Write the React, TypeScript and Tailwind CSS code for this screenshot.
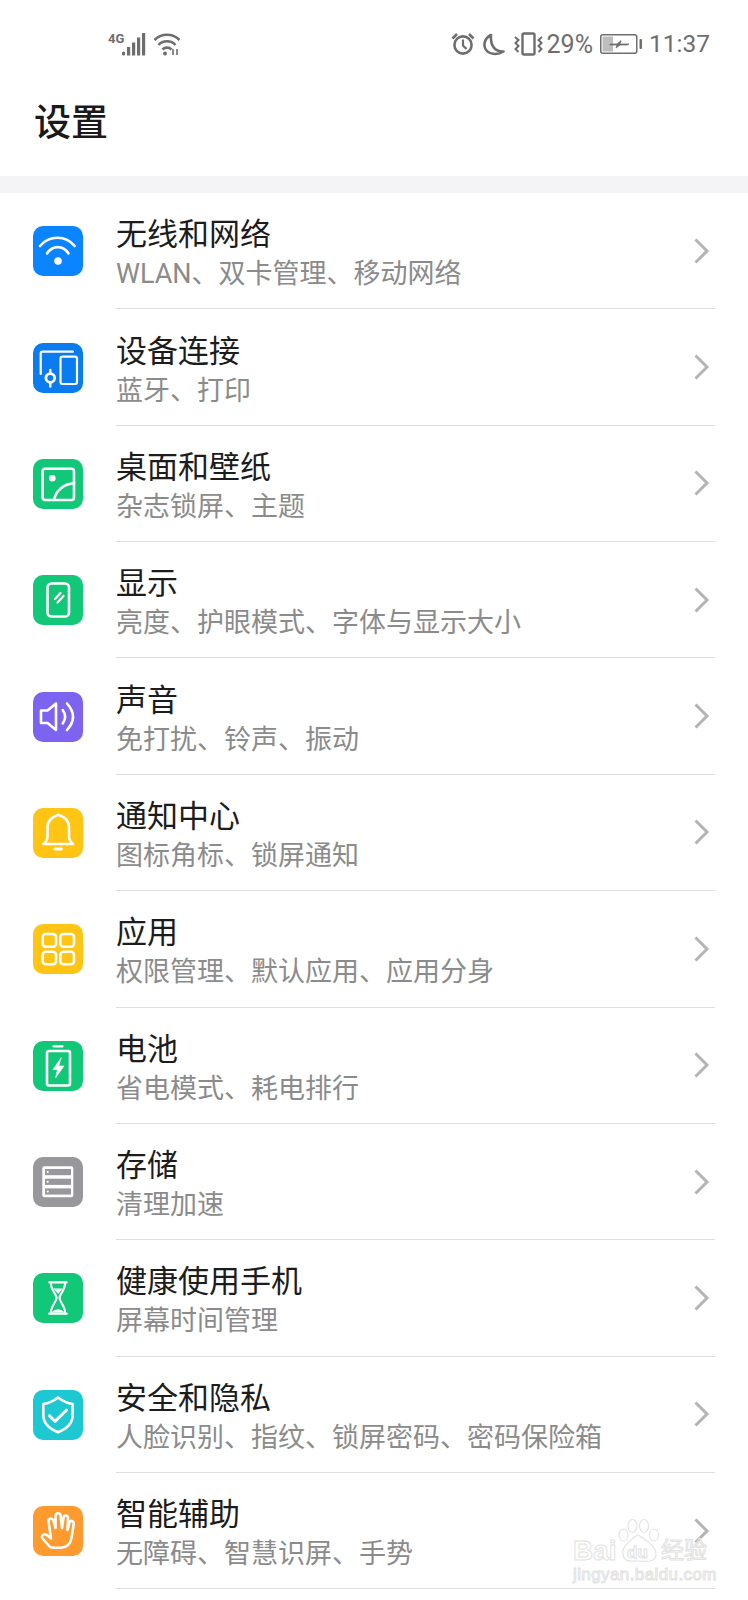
import type { ReactNode } from "react";

const cjk = "font-['Roboto','Noto_Sans_CJK_SC',sans-serif]";

function Glyph({ children }: { children: ReactNode }) {
  return (
    <svg width="50" height="50" viewBox="0 0 50 50" fill="none" stroke="#fff" strokeWidth="2.6" strokeLinecap="round" strokeLinejoin="round">
      {children}
    </svg>
  );
}

const items = [
  {
    title: "无线和网络",
    sub: "WLAN、双卡管理、移动网络",
    bg: "bg-[#0a84ff]",
    icon: (
      <Glyph>
        <path d="M7 20 C 16 9, 33 9, 41.6 20" />
        <path d="M14 27.5 C 19.5 19, 30 19, 35.5 27.5" />
        <circle cx="25" cy="35" r="3.8" fill="#fff" stroke="none" />
      </Glyph>
    ),
  },
  {
    title: "设备连接",
    sub: "蓝牙、打印",
    bg: "bg-[#0a7cf0]",
    icon: (
      <Glyph>
        <path d="M7.7 31 V10.5 Q7.7 8.7 9.5 8.7 H40" strokeWidth="2.2" />
        <rect x="27.5" y="13.7" width="16.5" height="27.3" rx="2" strokeWidth="2.2" />
        <circle cx="17.3" cy="35" r="4.4" strokeWidth="2.8" />
        <path d="M17.3 27 V30.5 M17.3 39.5 V43.5" strokeWidth="2.4" />
      </Glyph>
    ),
  },
  {
    title: "桌面和壁纸",
    sub: "杂志锁屏、主题",
    bg: "bg-[#12c878]",
    icon: (
      <Glyph>
        <rect x="9.7" y="9.7" width="31.3" height="31.3" rx="2.5" />
        <circle cx="19.3" cy="19.3" r="3.3" fill="#fff" stroke="none" />
        <path d="M21 41 C 23 31, 31 25, 41 24.3" />
      </Glyph>
    ),
  },
  {
    title: "显示",
    sub: "亮度、护眼模式、字体与显示大小",
    bg: "bg-[#12c878]",
    icon: (
      <Glyph>
        <rect x="14.5" y="8.5" width="21.5" height="33" rx="4" />
        <path d="M22 24 L27.5 18 M24.5 27.5 L30.5 21" strokeWidth="2.2" />
      </Glyph>
    ),
  },
  {
    title: "声音",
    sub: "免打扰、铃声、振动",
    bg: "bg-[#7d64f0]",
    icon: (
      <Glyph>
        <path d="M8 18.5 H14.5 L23 11.5 V38 L14.5 31 H8 Z" />
        <path d="M29.7 18 Q34.5 24.7 29.7 31.5" />
        <path d="M34 11.5 Q46 24.7 34 38" />
      </Glyph>
    ),
  },
  {
    title: "通知中心",
    sub: "图标角标、锁屏通知",
    bg: "bg-[#ffc414]",
    icon: (
      <Glyph>
        <path d="M10.5 36 Q14.5 33 14.5 28 V19 C14.5 12 19 9 25.2 6.8 C31.5 9 36 12 36 19 V28 Q36 33 40 36 Z" />
        <path d="M22 41 H28.5" strokeWidth="2.8" />
      </Glyph>
    ),
  },
  {
    title: "应用",
    sub: "权限管理、默认应用、应用分身",
    bg: "bg-[#ffc414]",
    icon: (
      <Glyph>
        <rect x="9.7" y="10" width="13.3" height="12.7" rx="3" />
        <rect x="27.3" y="10" width="13.7" height="12.7" rx="3" />
        <rect x="9.7" y="27.7" width="13.3" height="12.5" rx="3" />
        <rect x="27.3" y="27.7" width="13.7" height="12.5" rx="3" />
      </Glyph>
    ),
  },
  {
    title: "电池",
    sub: "省电模式、耗电排行",
    bg: "bg-[#12c878]",
    icon: (
      <Glyph>
        <path d="M20.5 5.3 H29.5" strokeWidth="2.2" />
        <rect x="14" y="10" width="23" height="34.5" rx="2" />
        <path d="M28 17 L20 28.5 H24.5 L22.5 37 L31 25 H26 Z" fill="#fff" strokeWidth="0.6" />
      </Glyph>
    ),
  },
  {
    title: "存储",
    sub: "清理加速",
    bg: "bg-[#98989c]",
    icon: (
      <Glyph>
        <rect x="9.3" y="9.3" width="31" height="31" rx="2" fill="#fff" stroke="none" />
        <g fill="#98989c" stroke="none">
          <rect x="12" y="12" width="26" height="6.2" />
          <rect x="12" y="21.7" width="26" height="6.2" />
          <rect x="12" y="31.4" width="26" height="6.2" />
        </g>
        <g fill="#fff" stroke="none">
          <circle cx="14.7" cy="15" r="1.1" />
          <circle cx="14.7" cy="24.8" r="1.1" />
          <circle cx="14.7" cy="34.5" r="1.1" />
        </g>
      </Glyph>
    ),
  },
  {
    title: "健康使用手机",
    sub: "屏幕时间管理",
    bg: "bg-[#12c878]",
    icon: (
      <Glyph>
        <path d="M16.3 9.3 H33.7 M16.3 40.7 H33.7" strokeWidth="2.2" />
        <path d="M18 9.5 C17 16 23.5 21 23.5 25 C23.5 29 17 34 18 40.5" strokeWidth="2.2" />
        <path d="M32 9.5 C33 16 26.5 21 26.5 25 C26.5 29 33 34 32 40.5" strokeWidth="2.2" />
        <path d="M20.5 15.5 H29.5 L25 21 Z" fill="#fff" stroke="none" />
        <path d="M18.5 39.5 Q25 33 31.5 39.5 Z" fill="#fff" stroke="none" />
      </Glyph>
    ),
  },
  {
    title: "安全和隐私",
    sub: "人脸识别、指纹、锁屏密码、密码保险箱",
    bg: "bg-[#1ec8d2]",
    icon: (
      <Glyph>
        <path d="M25 7.5 Q32 13 39.7 14 V25 C39.7 34 32 39.5 25 42.3 C18 39.5 10.3 34 10.3 25 V14 Q18 13 25 7.5 Z" />
        <path d="M16.5 25.7 L22 31.3 L33.7 20" strokeWidth="3" />
      </Glyph>
    ),
  },
  {
    title: "智能辅助",
    sub: "无障碍、智慧识屏、手势",
    bg: "bg-[#ff9a2e]",
    icon: (
      <Glyph>
        <path d="M17 41 L9.5 32.5 Q8 30 10.5 28.5 Q12.5 27.5 15 30 L18 32.5 L15.5 15.5 Q15.3 12.8 17.5 12.5 Q19.5 12.3 20.3 14.5 L22.5 22 L22.5 10 Q22.8 7.3 25 7.3 Q27.5 7.3 27.7 10 L29 22 L30.5 11.5 Q31 9.3 33 9.5 Q35.2 9.8 35 12.5 L34.5 24 L36.5 16.5 Q37.3 14.5 39 15 Q41 15.7 40.7 18 L38.5 32 Q36.5 41.7 28 41.7 H21 Q18.5 41.7 17 41 Z" />
      </Glyph>
    ),
  },
];

function Row({ item }: { item: (typeof items)[number] }) {
  return (
    <div className="flex h-[116.36px] items-stretch pl-[33px] pr-[33px]">
      <div className="flex w-[83px] shrink-0 items-center">
        <div className={`h-[50px] w-[50px] rounded-[10px] ${item.bg}`}>{item.icon}</div>
      </div>
      <div className="flex flex-1 items-center border-b-[1.5px] border-[#dedede]">
        <div className="flex-1 pt-[8px]">
          <div className="text-[31px] leading-[38px] text-[#1c1c1c]">{item.title}</div>
          <div className="mt-[1px] text-[27px] leading-[38px] text-[#8b8b8b]">{item.sub}</div>
        </div>
        <svg width="18" height="28" viewBox="0 0 18 28" fill="none" stroke="#b4b4b4" strokeWidth="3" className="mr-[4px]">
          <path d="M2.5 2.5 L14 14 L2.5 25.5" />
        </svg>
      </div>
    </div>
  );
}

function StatusBar() {
  const gray = "#6e6e6e";
  return (
    <div className="flex h-[88px] items-center justify-between pl-[108px] pr-[38px] font-['Roboto',sans-serif] text-[#6e6e6e]">
      <div className="flex items-center">
        <div className="relative flex h-[24px] w-[38px] items-end">
          <span className="absolute left-0 top-0 text-[13px] font-bold leading-[13px]">4G</span>
          <svg width="38" height="24" viewBox="0 0 38 24" fill={gray}>
            <rect x="14" y="19.5" width="3.2" height="4" rx="1.6" />
            <rect x="19" y="15" width="3.2" height="8.5" />
            <rect x="24" y="10.5" width="3.2" height="13" />
            <rect x="29" y="5.5" width="3.2" height="18" />
            <rect x="34" y="1" width="3.2" height="22.5" />
          </svg>
        </div>
        <svg width="28" height="24" viewBox="0 0 28 24" fill="none" stroke={gray} strokeWidth="2.6" className="ml-[7px]">
          <path d="M1.5 8 C8 1, 20 1, 26.5 8" />
          <path d="M5.5 13 C10 8, 18 8, 22.5 13" />
          <path d="M9.5 17.5 C12 15, 16 15, 18.5 17.5" />
          <circle cx="12" cy="21.5" r="2" fill={gray} stroke="none" />
          <path d="M20 17 V23 M24 17 V23" strokeWidth="1.6" />
        </svg>
      </div>
      <div className="flex items-center">
        <svg width="24" height="24" viewBox="0 0 24 24" fill="none" stroke={gray} strokeWidth="2.6">
          <circle cx="12" cy="13" r="8.6" />
          <path d="M12 7.5 V13.5 L15.5 17" strokeWidth="2.2" />
          <path d="M1.5 6.5 L6 2 M22.5 6.5 L18 2" />
        </svg>
        <svg width="23" height="23" viewBox="0 0 23 23" fill="none" stroke={gray} strokeWidth="2.6" strokeLinejoin="round" className="ml-[7px]">
          <path d="M9 2 C3 5 1 11 3.5 16 C6.5 21.5 15 22.5 21.5 18.5 C14 19 8 14 9 2 Z" />
        </svg>
        <svg width="29" height="24" viewBox="0 0 29 24" fill="none" stroke={gray} strokeWidth="2" className="ml-[9px]">
          <rect x="8.5" y="1.5" width="12" height="21" rx="1.5" strokeWidth="2.4" />
          <path d="M1 5 L4.5 8 L1.5 11 L4.5 14 L1.5 17 L4.5 20" />
          <path d="M28 5 L24.5 8 L27.5 11 L24.5 14 L27.5 17 L24.5 20" />
        </svg>
        <span className="ml-[4px] text-[25px] leading-none">29%</span>
        <svg width="43" height="20" viewBox="0 0 43 20" fill="none" className="ml-[7px]">
          <rect x="0.75" y="0.75" width="36" height="18.5" rx="2" stroke={gray} strokeWidth="1.5" />
          <rect x="2.5" y="2.5" width="10.5" height="15" fill="#bdbdbd" />
          <path d="M10 10 H17 L21 6.5 L20 10 H29 L27 11 H20 L16 14 L17 11 H10 Z" fill={gray} stroke={gray} strokeWidth="0.8" />
          <rect x="39.5" y="5" width="2.5" height="10" rx="1" fill={gray} />
        </svg>
        <span className="ml-[6px] text-[24.5px] leading-none">11:37</span>
      </div>
    </div>
  );
}

export default function App() {
  return (
    <div className={`relative h-[1600px] w-[748px] overflow-hidden bg-white ${cjk}`}>
      <StatusBar />
      <div className="flex h-[88px] items-start pl-[34px] pt-[11px] text-[37px] font-medium leading-[50px] text-[#1a1a1a]">设置</div>
      <div className="h-[17px] bg-[#f4f4f6]" />
      {items.map((item) => (
        <Row key={item.title} item={item} />
      ))}

      {/* baidu watermark */}
      <div className="absolute left-[573px] top-[1519px] h-[66px] w-[136px] font-['Liberation_Sans',sans-serif] text-transparent [-webkit-text-stroke:1px_#e2e2e2]">
        <svg width="44" height="46" viewBox="0 0 44 46" fill="none" stroke="#e4e4e4" strokeWidth="1.2" className="absolute left-[45px] top-0">
          <ellipse cx="5.5" cy="16" rx="4.5" ry="6" />
          <ellipse cx="14.5" cy="7" rx="4.5" ry="6.5" />
          <ellipse cx="26" cy="7" rx="4.5" ry="6.5" />
          <ellipse cx="36" cy="16" rx="4.5" ry="6" />
          <path d="M20 16 C14 20 3 27 5 36 C7 44 14 42 20 42 C26 42 36 45 38 36 C39 27 26 20 20 16 Z" />
        </svg>
        <div className="absolute left-0 top-[17px] text-[28px] font-bold leading-[30px]">Bai</div>
        <div className="absolute left-[54px] top-[24px] text-[17px] font-bold leading-[20px]">du</div>
        <div className={`absolute left-[88px] top-[18px] whitespace-nowrap text-[23px] leading-[28px] ${cjk}`}>经验</div>
        <div className="absolute left-0 top-[47px] whitespace-nowrap text-[17px] leading-[18px] tracking-[0.4px]">jingyan.baidu.com</div>
      </div>
    </div>
  );
}
